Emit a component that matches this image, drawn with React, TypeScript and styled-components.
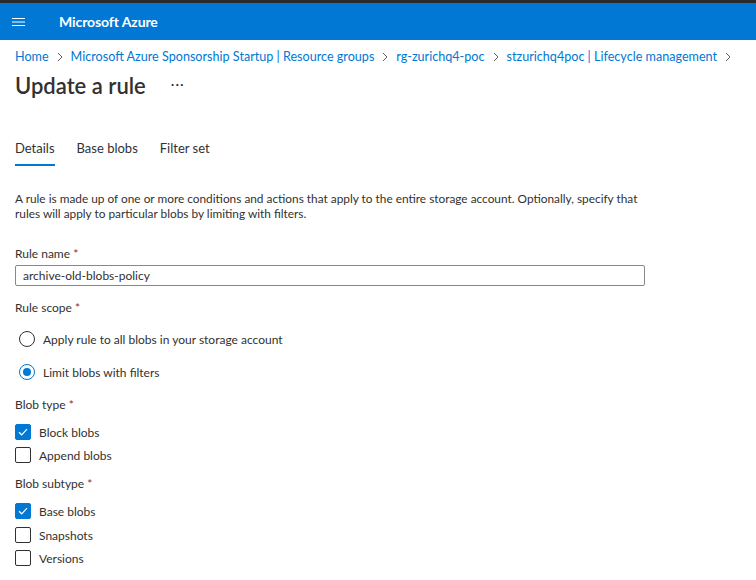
import React from "react";
import styled, { createGlobalStyle } from "styled-components";

const Global = createGlobalStyle`
  html, body { margin: 0; padding: 0; background: #fff; }
  body { font-family: "Lato", "Noto Sans", sans-serif; color: #323130; }
  * { box-sizing: border-box; }
`;

const Page = styled.div`
  width: 756px;
  height: 580px;
  overflow: hidden;
  display: flex;
  flex-direction: column;
`;

const TopStrip = styled.div`
  height: 3px;
  background: #2b2b2b;
`;

const Header = styled.header`
  height: 37px;
  background: #0078d4;
  display: flex;
  align-items: center;
  color: #fff;
`;

const MenuButton = styled.div`
  width: 59px;
  height: 37px;
  display: flex;
  align-items: center;
  padding-left: 12px;
`;

const Brand = styled.div`
  font-size: 14px;
  font-weight: 700;
  letter-spacing: -0.1px;
`;

const Content = styled.main`
  padding: 0 15px;
  display: flex;
  flex-direction: column;
`;

const Breadcrumb = styled.nav`
  height: 32px;
  padding-top: 1px;
  display: flex;
  align-items: center;
  font-size: 12.6px;
  color: #0078d4;
  white-space: nowrap;
`;

const Crumb = styled.span``;

const Chevron = styled.span`
  display: inline-flex;
  margin: 0 8px 0 8px;
  color: #605e5c;
`;

const TitleRow = styled.div`
  height: 27px;
  display: flex;
  align-items: center;
  gap: 25px;
`;

const Title = styled.h1`
  margin: 0;
  font-size: 22px;
  font-weight: 600;
  color: #323130;
`;

const More = styled.span`
  font-size: 14px;
  color: #323130;
  letter-spacing: 1px;
  position: relative;
  top: -2px;
`;

const Tabs = styled.div`
  margin-top: 41px;
  display: flex;
  gap: 22px;
`;

const Tab = styled.div<{ $active?: boolean }>`
  font-size: 13px;
  color: #323130;
  padding-bottom: 8px;
  border-bottom: 2px solid ${(p) => (p.$active ? "#0078d4" : "transparent")};
`;

const Description = styled.p`
  margin: 25px 0 0;
  font-size: 11.85px;
  line-height: 15px;
  width: 640px;
`;

const Label = styled.div<{ $top: number }>`
  margin-top: ${(p) => p.$top}px;
  font-size: 12px;
  line-height: 15px;
`;

const Req = styled.span`
  color: #a4262c;
`;

const Input = styled.div`
  margin-top: 4px;
  width: 630px;
  height: 21px;
  border: 1px solid #8a8886;
  border-radius: 2px;
  font-size: 12px;
  padding: 0 7px;
  display: flex;
  align-items: center;
`;

const RadioRow = styled.div<{ $top: number }>`
  margin-top: ${(p) => p.$top}px;
  margin-left: 4px;
  display: flex;
  align-items: center;
  gap: 8px;
  font-size: 12px;
  height: 18px;
`;

const RadioCircle = styled.span<{ $on?: boolean }>`
  width: 16px;
  height: 16px;
  border-radius: 50%;
  border: 1px solid ${(p) => (p.$on ? "#0078d4" : "#323130")};
  display: flex;
  align-items: center;
  justify-content: center;
  &::after {
    content: "";
    width: 8px;
    height: 8px;
    border-radius: 50%;
    background: ${(p) => (p.$on ? "#0078d4" : "transparent")};
  }
`;

const CheckRow = styled.div<{ $top: number }>`
  margin-top: ${(p) => p.$top}px;
  display: flex;
  align-items: center;
  gap: 8px;
  font-size: 12px;
  height: 16px;
`;

const Box = styled.span<{ $on?: boolean }>`
  width: 16px;
  height: 16px;
  border-radius: 2px;
  border: 1px solid ${(p) => (p.$on ? "#0078d4" : "#323130")};
  background: ${(p) => (p.$on ? "#0078d4" : "#fff")};
  display: flex;
  align-items: center;
  justify-content: center;
`;

const Check = () => (
  <svg width="10" height="8" viewBox="0 0 10 8">
    <path d="M1 4.2 L3.7 6.8 L9 1.2" fill="none" stroke="#fff" strokeWidth="1.2" />
  </svg>
);

const Hamburger = () => (
  <svg width="13" height="10" viewBox="0 0 13 10">
    <path d="M0 1.5h13M0 5h13M0 8.5h13" stroke="#fff" strokeWidth="1" />
  </svg>
);

const Chev = () => (
  <svg width="6" height="10" viewBox="0 0 6 10">
    <path d="M1 1 L5 5 L1 9" fill="none" stroke="#605e5c" strokeWidth="1" />
  </svg>
);

const crumbs = [
  "Home",
  "Microsoft Azure Sponsorship Startup | Resource groups",
  "rg-zurichq4-poc",
  "stzurichq4poc | Lifecycle management",
];

const CheckItem = ({ top, on, label }: { top: number; on?: boolean; label: string }) => (
  <CheckRow $top={top}>
    <Box $on={on}>{on && <Check />}</Box>
    {label}
  </CheckRow>
);

export default function App() {
  return (
    <Page>
      <Global />
      <TopStrip />
      <Header>
        <MenuButton>
          <Hamburger />
        </MenuButton>
        <Brand>Microsoft Azure</Brand>
      </Header>
      <Content>
        <Breadcrumb>
          {crumbs.map((c) => (
            <React.Fragment key={c}>
              <Crumb>{c}</Crumb>
              <Chevron>
                <Chev />
              </Chevron>
            </React.Fragment>
          ))}
        </Breadcrumb>
        <TitleRow>
          <Title>Update a rule</Title>
          <More>···</More>
        </TitleRow>
        <Tabs>
          <Tab $active>Details</Tab>
          <Tab>Base blobs</Tab>
          <Tab>Filter set</Tab>
        </Tabs>
        <Description>
          A rule is made up of one or more conditions and actions that apply to the entire storage account. Optionally,
          specify that rules will apply to particular blobs by limiting with filters.
        </Description>
        <Label $top={25}>
          Rule name <Req>*</Req>
        </Label>
        <Input>archive-old-blobs-policy</Input>
        <Label $top={14}>
          Rule scope <Req>*</Req>
        </Label>
        <RadioRow $top={15}>
          <RadioCircle />
          Apply rule to all blobs in your storage account
        </RadioRow>
        <RadioRow $top={15}>
          <RadioCircle $on />
          Limit blobs with filters
        </RadioRow>
        <Label $top={16}>
          Blob type <Req>*</Req>
        </Label>
        <CheckItem top={12} on label="Block blobs" />
        <CheckItem top={7} label="Append blobs" />
        <Label $top={13}>
          Blob subtype <Req>*</Req>
        </Label>
        <CheckItem top={12} on label="Base blobs" />
        <CheckItem top={8} label="Snapshots" />
        <CheckItem top={7} label="Versions" />
      </Content>
    </Page>
  );
}
